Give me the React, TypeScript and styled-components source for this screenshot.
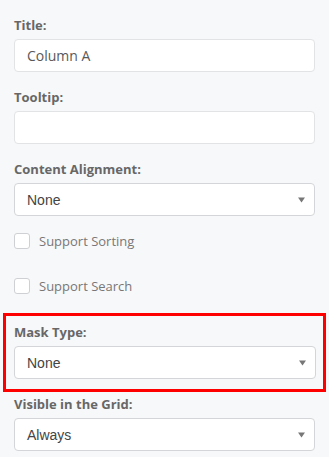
import React from "react";
import styled, { createGlobalStyle } from "styled-components";

const Global = createGlobalStyle`
  html, body { margin: 0; padding: 0; background: #f7f8fa; }
  * { box-sizing: border-box; }
`;

const Panel = styled.div`
  width: 329px;
  height: 457px;
  overflow: hidden;
  background: #f7f8fa;
  padding: 15px 14px 0 14px;
  font-family: "Open Sans", "Liberation Sans", sans-serif;
`;

const Field = styled.div<{ $mb?: number }>`
  display: flex;
  flex-direction: column;
  gap: 4px;
  margin-bottom: ${(p) => (p.$mb ?? 15)}px;
`;

const Label = styled.label`
  display: block;
  height: 20px;
  line-height: 20px;
  font-size: 13px;
  font-weight: 700;
  color: #676767;
`;

const TextInput = styled.input`
  width: 100%;
  height: 33px;
  border: 1px solid #e2e3e5;
  border-radius: 4px;
  background: #fff;
  padding: 0 12px;
  font-family: "Open Sans", sans-serif;
  font-size: 14px;
  color: #595959;
  outline: none;
`;

const SelectBox = styled.div`
  width: 100%;
  height: 33px;
  border: 1px solid #d4d5d8;
  border-radius: 4px;
  background: #fff;
  padding: 0 9px 0 12px;
  display: flex;
  align-items: center;
  justify-content: space-between;
  font-family: "Liberation Sans", Arial, sans-serif;
  font-size: 14px;
  color: #444;
`;

const CheckRow = styled.div<{ $mb: number }>`
  display: flex;
  align-items: center;
  gap: 9px;
  height: 16px;
  margin-bottom: ${(p) => p.$mb}px;
`;

const Box = styled.span`
  width: 16px;
  height: 16px;
  border: 1px solid #cfd0d3;
  border-radius: 3px;
  background: #fff;
  flex: none;
`;

const CheckText = styled.span`
  font-size: 13px;
  color: #777;
  line-height: 16px;
`;

const Highlight = styled.div`
  margin: 0 -11px 2px -11px;
  padding: 6px 7px 10px 8px;
  border: 3px solid #ff0000;
`;

const Arrow = () => (
  <svg width="7" height="6" viewBox="0 0 7 6">
    <path d="M0 0.5 H7 L3.5 5.5 Z" fill="#777" />
  </svg>
);

const Select = ({ value }: { value: string }) => (
  <SelectBox>
    <span>{value}</span>
    <Arrow />
  </SelectBox>
);

export default function App() {
  return (
    <>
      <Global />
      <Panel>
        <Field>
          <Label>Title:</Label>
          <TextInput readOnly defaultValue="Column A" />
        </Field>
        <Field>
          <Label>Tooltip:</Label>
          <TextInput readOnly defaultValue="" />
        </Field>
        <Field $mb={17}>
          <Label>Content Alignment:</Label>
          <Select value="None" />
        </Field>
        <CheckRow $mb={29}>
          <Box />
          <CheckText>Support Sorting</CheckText>
        </CheckRow>
        <CheckRow $mb={19}>
          <Box />
          <CheckText>Support Search</CheckText>
        </CheckRow>
        <Highlight>
          <Field $mb={0}>
            <Label>Mask Type:</Label>
            <Select value="None" />
          </Field>
        </Highlight>
        <Field $mb={0}>
          <Label>Visible in the Grid:</Label>
          <Select value="Always" />
        </Field>
      </Panel>
    </>
  );
}
